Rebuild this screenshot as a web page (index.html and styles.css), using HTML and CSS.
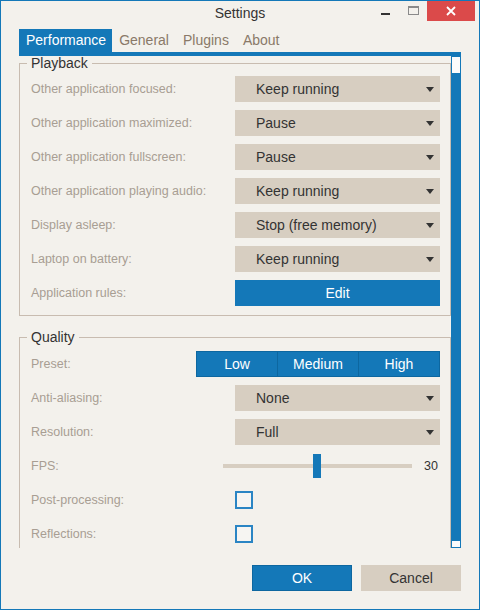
FILE: index.html
```html
<!DOCTYPE html>
<html>
<head>
<meta charset="utf-8">
<link rel="stylesheet" href="styles.css">
</head>
<body>
<div class="window">
  <div class="titlebar">
    <div></div>
    <div class="title">Settings</div>
    <div class="controls">
      <div class="ctl ctl-min"><span class="dash"></span></div>
      <div class="ctl ctl-max"><span class="box"></span></div>
      <div class="ctl ctl-close">
        <svg width="12" height="12" viewBox="0 0 12 12"><path d="M2 2 L10 10 M10 2 L2 10" stroke="#fff" stroke-width="1.8"/></svg>
      </div>
    </div>
  </div>
  <div class="tabs">
    <div class="tab active">Performance</div>
    <div class="tab">General</div>
    <div class="tab">Plugins</div>
    <div class="tab">About</div>
  </div>
  <div class="main">
    <div class="content">
      <fieldset class="group">
        <legend>Playback</legend>
        <div class="rows">
          <div class="row"><span class="label">Other application focused:</span><div class="select">Keep running<svg class="arrow" width="8" height="5" viewBox="0 0 8 5"><path d="M0 0H8L4 5Z" fill="#333"/></svg></div></div>
          <div class="row"><span class="label">Other application maximized:</span><div class="select">Pause<svg class="arrow" width="8" height="5" viewBox="0 0 8 5"><path d="M0 0H8L4 5Z" fill="#333"/></svg></div></div>
          <div class="row"><span class="label">Other application fullscreen:</span><div class="select">Pause<svg class="arrow" width="8" height="5" viewBox="0 0 8 5"><path d="M0 0H8L4 5Z" fill="#333"/></svg></div></div>
          <div class="row"><span class="label">Other application playing audio:</span><div class="select">Keep running<svg class="arrow" width="8" height="5" viewBox="0 0 8 5"><path d="M0 0H8L4 5Z" fill="#333"/></svg></div></div>
          <div class="row"><span class="label">Display asleep:</span><div class="select">Stop (free memory)<svg class="arrow" width="8" height="5" viewBox="0 0 8 5"><path d="M0 0H8L4 5Z" fill="#333"/></svg></div></div>
          <div class="row"><span class="label">Laptop on battery:</span><div class="select">Keep running<svg class="arrow" width="8" height="5" viewBox="0 0 8 5"><path d="M0 0H8L4 5Z" fill="#333"/></svg></div></div>
          <div class="row"><span class="label">Application rules:</span><div class="btn-edit">Edit</div></div>
        </div>
      </fieldset>
      <fieldset class="group group-quality">
        <legend>Quality</legend>
        <div class="rows">
          <div class="row"><span class="label">Preset:</span>
            <div class="segmented"><div class="seg">Low</div><div class="seg">Medium</div><div class="seg">High</div></div>
          </div>
          <div class="row"><span class="label">Anti-aliasing:</span><div class="select">None<svg class="arrow" width="8" height="5" viewBox="0 0 8 5"><path d="M0 0H8L4 5Z" fill="#333"/></svg></div></div>
          <div class="row"><span class="label">Resolution:</span><div class="select">Full<svg class="arrow" width="8" height="5" viewBox="0 0 8 5"><path d="M0 0H8L4 5Z" fill="#333"/></svg></div></div>
          <div class="row"><span class="label">FPS:</span>
            <div class="slider"><div class="track"><div class="thumb"></div></div><span class="value">30</span></div>
          </div>
          <div class="row"><span class="label">Post-processing:</span><div class="check-wrap"><span class="checkbox"></span></div></div>
          <div class="row"><span class="label">Reflections:</span><div class="check-wrap"><span class="checkbox"></span></div></div>
        </div>
      </fieldset>
    </div>
    <div class="scrollbar"><div class="sb-thumb"></div><div class="sb-end"></div></div>
  </div>
  <div class="footer">
    <div class="btn btn-ok">OK</div>
    <div class="btn btn-cancel">Cancel</div>
  </div>
</div>
</body>
</html>
```

FILE: styles.css
```css
* { box-sizing: border-box; }
html, body { margin: 0; padding: 0; }
body {
  font-family: "Liberation Sans", Arial, sans-serif;
  background: #f3f1ec;
}
.window {
  width: 480px;
  height: 610px;
  border: 1px solid #1478b8;
  background: #f3f1ec;
  display: flex;
  flex-direction: column;
  overflow: hidden;
}
.titlebar {
  height: 28px;
  display: grid;
  grid-template-columns: 1fr auto 1fr;
  align-items: start;
}
.title {
  font-size: 14px;
  color: #333;
  line-height: 25px;
}
.controls {
  justify-self: end;
  display: flex;
  margin-right: 4px;
  height: 20px;
}
.ctl {
  display: flex;
  align-items: center;
  justify-content: center;
  height: 20px;
}
.ctl-min { width: 29px; }
.ctl-max { width: 27px; }
.ctl-close { width: 48px; background: #db4a4a; }
.dash {
  display: block;
  width: 9px;
  height: 2px;
  background: #333;
  margin-top: 5px;
}
.box {
  display: block;
  width: 11px;
  height: 9px;
  border: 1px solid #8a8a8a;
  border-top-width: 2px;
  margin-top: -2px;
}
.tabs {
  display: flex;
  margin-left: 18px;
  width: 442px;
  border-bottom: 4px solid #1478b8;
}
.tab {
  font-size: 14px;
  line-height: 23px;
  padding: 0 7px;
  color: #8a7968;
}
.tab.active {
  background: #1478b8;
  color: #fff;
  padding: 0 6px 0 7px;
}
.main {
  display: flex;
  margin-left: 18px;
  width: 442px;
  height: 492px;
}
.content {
  width: 432px;
  overflow: hidden;
}
.scrollbar {
  width: 10px;
  background: #1478b8;
  padding: 1px;
  display: flex;
  flex-direction: column;
  justify-content: space-between;
}
.sb-thumb { height: 16px; background: #fbfbfb; }
.sb-end { height: 6px; background: #fbfbfb; }
.group {
  margin: 0;
  min-width: 0;
  border: 1px solid #c8bcb0;
  padding: 6px 10px 9px 7px;
}
.group-quality { margin-top: 14px; padding-top: 7px; }
.group legend {
  font-size: 14px;
  color: #333;
  line-height: 14px;
  padding: 0 4px;
}
.rows {
  display: flex;
  flex-direction: column;
  gap: 8px;
  padding-left: 4px;
}
.row {
  display: flex;
  align-items: center;
  justify-content: space-between;
  height: 26px;
}
.label {
  font-size: 12.5px;
  color: #a89e93;
}
.select {
  width: 205px;
  height: 26px;
  background: #d7cec1;
  display: flex;
  align-items: center;
  justify-content: space-between;
  padding: 0 6px 0 21px;
  font-size: 14px;
  color: #333;
}
.arrow { display: block; }
.btn-edit {
  width: 205px;
  height: 26px;
  background: #1478b8;
  color: #fff;
  font-size: 14px;
  display: flex;
  align-items: center;
  justify-content: center;
}
.segmented {
  width: 244px;
  height: 26px;
  display: flex;
  border: 1px solid #0d67a0;
  background: #1478b8;
}
.seg {
  flex: 1;
  display: flex;
  align-items: center;
  justify-content: center;
  color: #fff;
  font-size: 14px;
}
.seg + .seg { border-left: 1px solid #0d67a0; }
.slider {
  width: 217px;
  display: flex;
  align-items: center;
}
.track {
  position: relative;
  width: 189px;
  height: 4px;
  background: #d7cec1;
}
.thumb {
  position: absolute;
  left: 90px;
  top: -10px;
  width: 8px;
  height: 24px;
  background: #1478b8;
}
.value {
  flex: 1;
  text-align: right;
  padding-right: 2px;
  font-size: 12.5px;
  color: #333;
}
.check-wrap {
  width: 205px;
  display: flex;
  align-items: center;
}
.checkbox {
  display: block;
  width: 18px;
  height: 18px;
  border: 2px solid #2a85c4;
  background: #f6f5f2;
}
.footer {
  display: flex;
  justify-content: flex-end;
  gap: 9px;
  margin-top: 17px;
  padding-right: 18px;
}
.btn {
  width: 100px;
  height: 26px;
  display: flex;
  align-items: center;
  justify-content: center;
  font-size: 14px;
}
.btn-ok {
  background: #1478b8;
  border: 1px solid #0d67a0;
  color: #fff;
}
.btn-cancel {
  background: #d7cec1;
  color: #333;
}
```
